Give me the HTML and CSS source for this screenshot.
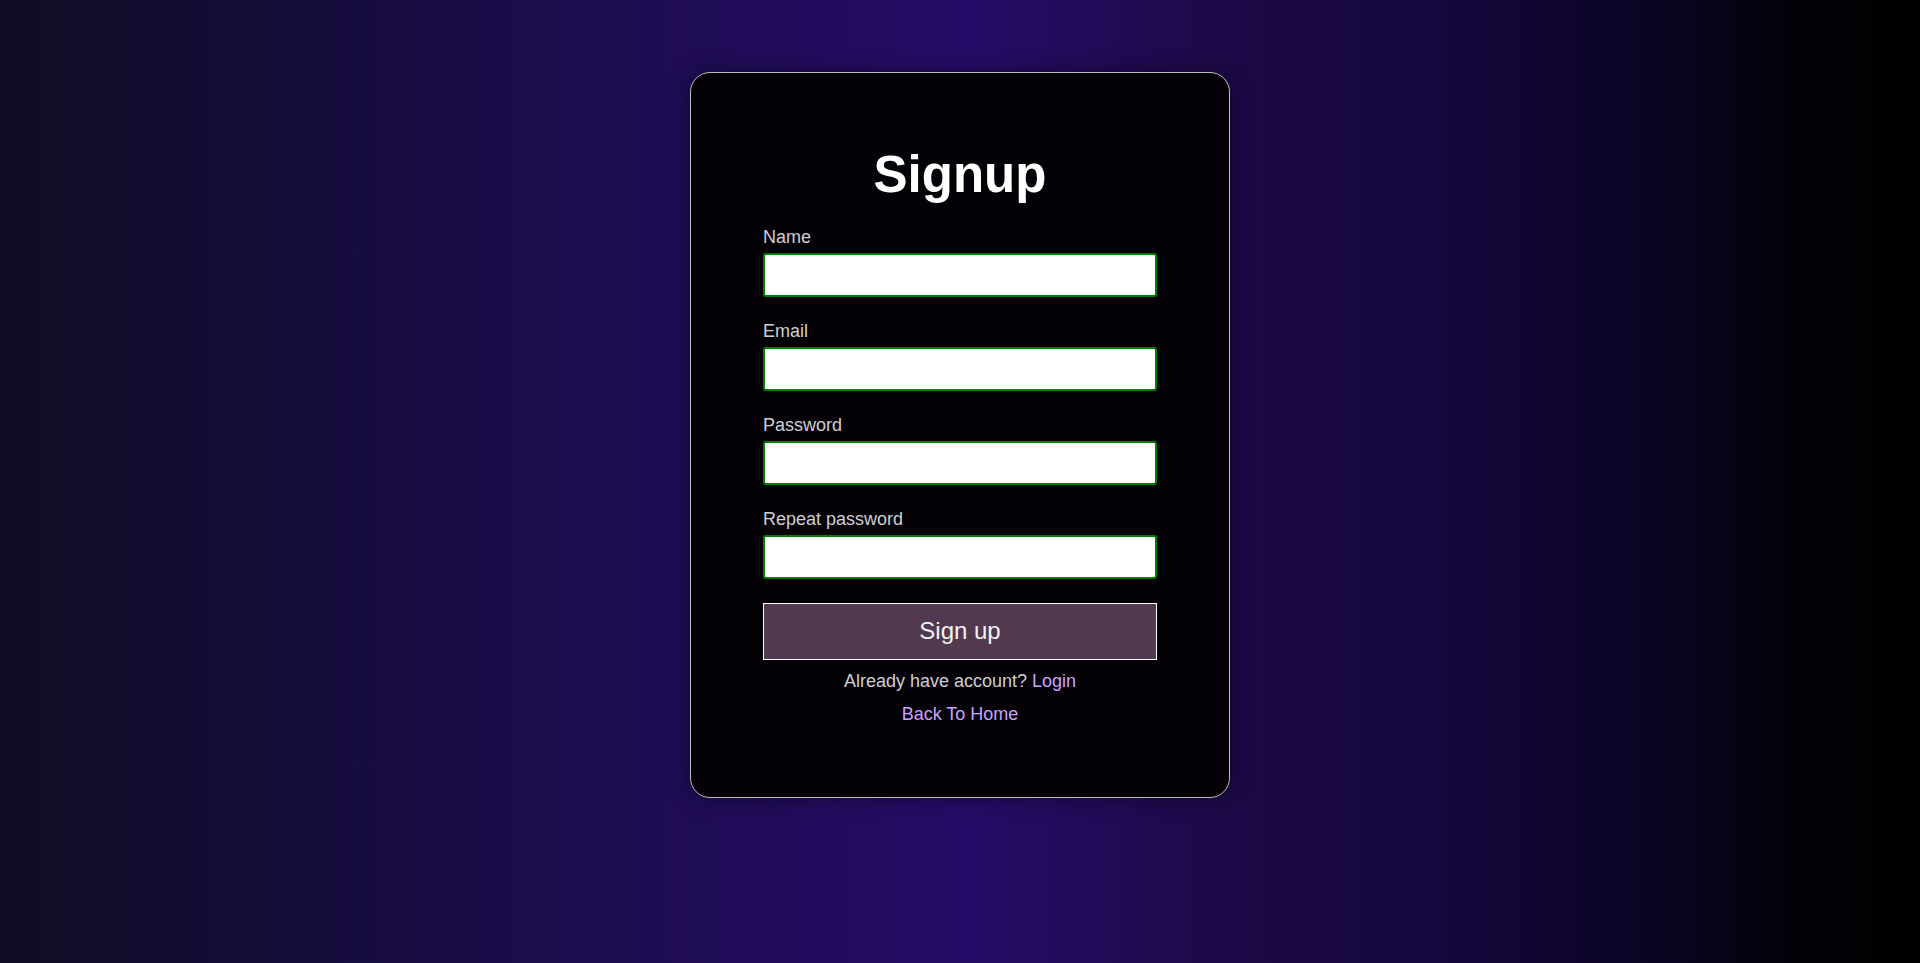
FILE: index.html
```
<!DOCTYPE html>
<html lang="en">
<head>
<meta charset="utf-8">
<title>Signup</title>
<link rel="stylesheet" href="styles.css">
</head>
<body>
<main class="card">
  <h1 class="title">Signup</h1>
  <form class="form">
    <div class="field">
      <label class="label" for="name">Name</label>
      <input class="input" id="name" type="text">
    </div>
    <div class="field">
      <label class="label" for="email">Email</label>
      <input class="input" id="email" type="email">
    </div>
    <div class="field">
      <label class="label" for="pw">Password</label>
      <input class="input" id="pw" type="password">
    </div>
    <div class="field">
      <label class="label" for="pw2">Repeat password</label>
      <input class="input" id="pw2" type="password">
    </div>
    <button class="btn" type="button">Sign up</button>
  </form>
  <p class="note">Already have account? <a class="link" href="#">Login</a></p>
  <p class="back"><a class="link" href="#">Back To Home</a></p>
</main>
</body>
</html>
```
FILE: styles.css
```
* { box-sizing: border-box; }
html, body { margin: 0; padding: 0; }
body {
  min-height: 100vh;
  padding-top: 72px;
  font-family: "Liberation Sans", Arial, sans-serif;
  background: linear-gradient(to right,
    #0e0d24 0%,
    #1b0c4a 27%,
    #260c68 50.5%,
    #1d0a48 63.5%,
    #16073f 74%,
    #0b0424 86%,
    #030106 94%,
    #000000 100%);
}
.card {
  width: 540px;
  margin: 0 auto;
  padding: 71.5px 72px 72.5px;
  background: #040207;
  border: 1px solid #bdbdbd;
  border-radius: 20px;
  box-shadow: 0 0 22px rgba(0, 0, 0, 0.45);
}
.title {
  margin: 0 0 23px;
  font-size: 51px;
  font-weight: bold;
  color: #ffffff;
  text-align: center;
}
.form { display: flex; flex-direction: column; }
.field {
  display: flex;
  flex-direction: column;
  margin-bottom: 23.5px;
}
.label {
  font-size: 18px;
  color: #cfcfd4;
  margin-bottom: 5.6px;
}
.input {
  width: 100%;
  height: 44px;
  border: 2px solid #008000;
  border-radius: 3px;
  background: #ffffff;
  font-size: 18px;
  padding: 0 8px;
}
.btn {
  height: 57px;
  width: 100%;
  background: #513a50;
  border: 1px solid #ffffff;
  color: #f2f2f2;
  font-family: "Liberation Sans", Arial, sans-serif;
  font-size: 24px;
}
.note {
  margin: 11px 0 0;
  font-size: 18px;
  color: #cfcfd4;
  text-align: center;
}
.back {
  margin: 12px 0 0;
  font-size: 18px;
  text-align: center;
}
.link {
  color: #c7a3ff;
  text-decoration: none;
}
```
